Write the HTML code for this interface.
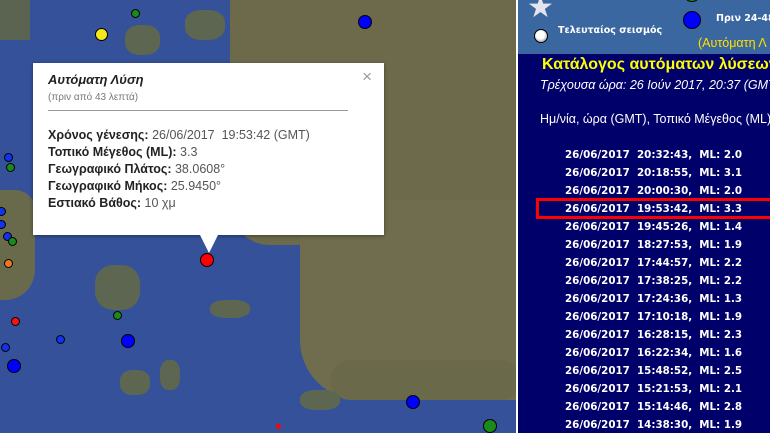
<!DOCTYPE html><html><head><meta charset="utf-8"><style>
*{margin:0;padding:0;box-sizing:border-box}
body{width:770px;height:433px;overflow:hidden;position:relative;background:#2f4c8c;font-family:"Liberation Sans","DejaVu Sans",sans-serif}
.map{position:absolute;left:0;top:0;width:516px;height:433px;overflow:hidden;background:#34519a}
.land{position:absolute;background:#6d6a4c}
.dot{position:absolute;border-radius:50%;border:1px solid #000}
.pop{position:absolute;left:33px;top:63px;width:351px;height:172px;background:#fff;box-shadow:0 1px 4px rgba(0,0,0,.4);font-size:13px;color:#222}
.pop b{color:#222}
.pop span{color:#555}
.right{position:absolute;left:516px;top:0;width:254px;height:433px;background:#fff}
.hdr{position:absolute;left:2px;top:0;width:252px;height:54px;background:#3b67a0}
.body{position:absolute;left:2px;top:54px;width:252px;height:379px;background:#00006a;color:#fff}
.row{position:absolute;left:47px;font-family:"DejaVu Sans",Verdana,sans-serif;font-weight:bold;font-size:10.3px;white-space:pre;color:#fff}
</style></head><body>
<div class="map">
<div class="land" style="left:230px;top:0;width:290px;height:245px;border-radius:0 0 0 40px"></div>
<div class="land" style="left:300px;top:200px;width:220px;height:200px;border-radius:40px 0 0 60px;background:#706c4e"></div>
<div class="land" style="left:330px;top:360px;width:190px;height:40px;background:#6a6a4a;border-radius:30px"></div>
<div class="land" style="left:0;top:190px;width:35px;height:110px;background:#696a4c;border-radius:0 20px 30px 0"></div>
<div class="land" style="left:0;top:0;width:30px;height:40px;background:#5a6450"></div>
<div class="land" style="left:185px;top:10px;width:40px;height:30px;border-radius:40%;background:#5d6650"></div>
<div class="land" style="left:125px;top:25px;width:35px;height:30px;border-radius:40%;background:#5d6650"></div>
<div class="land" style="left:95px;top:265px;width:45px;height:45px;border-radius:40%;background:#5d6650"></div>
<div class="land" style="left:210px;top:300px;width:40px;height:18px;border-radius:40%;background:#5d6650"></div>
<div class="land" style="left:160px;top:360px;width:20px;height:30px;border-radius:40%;background:#5d6650"></div>
<div class="land" style="left:120px;top:370px;width:30px;height:25px;border-radius:40%;background:#5d6650"></div>
<div class="land" style="left:300px;top:390px;width:40px;height:20px;border-radius:40%;background:#5d6650"></div>
<div class="dot" style="left:95px;top:28px;width:13px;height:13px;background:#f5e61e"></div>
<div class="dot" style="left:131px;top:9px;width:9px;height:9px;background:#1a8a1a"></div>
<div class="dot" style="left:358px;top:15px;width:14px;height:14px;background:#0000ff"></div>
<div class="dot" style="left:4px;top:153px;width:9px;height:9px;background:#1133ee"></div>
<div class="dot" style="left:6px;top:163px;width:9px;height:9px;background:#1a8a1a"></div>
<div class="dot" style="left:-3px;top:207px;width:9px;height:9px;background:#1133ee"></div>
<div class="dot" style="left:-3px;top:220px;width:9px;height:9px;background:#1133ee"></div>
<div class="dot" style="left:3px;top:232px;width:9px;height:9px;background:#1133ee"></div>
<div class="dot" style="left:8px;top:237px;width:9px;height:9px;background:#1a8a1a"></div>
<div class="dot" style="left:4px;top:259px;width:9px;height:9px;background:#ee7722"></div>
<div class="dot" style="left:11px;top:317px;width:9px;height:9px;background:#ff1111"></div>
<div class="dot" style="left:113px;top:311px;width:9px;height:9px;background:#1a8a1a"></div>
<div class="dot" style="left:56px;top:335px;width:9px;height:9px;background:#1133ee"></div>
<div class="dot" style="left:1px;top:343px;width:9px;height:9px;background:#1133ee"></div>
<div class="dot" style="left:121px;top:334px;width:14px;height:14px;background:#0000ff"></div>
<div class="dot" style="left:7px;top:359px;width:14px;height:14px;background:#0000ff"></div>
<div class="dot" style="left:200px;top:253px;width:14px;height:14px;background:#ff0000"></div>
<div class="dot" style="left:276px;top:424px;width:5px;height:5px;background:#ff0000;border:none"></div>
<div class="dot" style="left:406px;top:395px;width:14px;height:14px;background:#0000ff"></div>
<div class="dot" style="left:483px;top:419px;width:14px;height:14px;background:#1a8a1a"></div>
</div>
<div class="pop">
<div style="position:absolute;left:15px;top:9px;font-style:italic;font-weight:bold;font-size:13px">Αυτόματη Λύση</div>
<div style="position:absolute;left:15px;top:29px;font-size:10px;color:#777">(πριν από 43 λεπτά)</div>
<div style="position:absolute;right:12px;top:4px;font-size:17px;color:#999">×</div>
<div style="position:absolute;left:15px;top:47px;width:300px;border-top:1px solid #999"></div>
<div style="position:absolute;left:15px;top:64px;line-height:17px;font-size:12.5px">
<b>Χρόνος γένεσης:</b> <span>26/06/2017&nbsp; 19:53:42 (GMT)</span><br>
<b>Τοπικό Μέγεθος (ML):</b> <span>3.3</span><br>
<b>Γεωγραφικό Πλάτος:</b> <span>38.0608°</span><br>
<b>Γεωγραφικό Μήκος:</b> <span>25.9450°</span><br>
<b>Εστιακό Βάθος:</b> <span>10 χμ</span></div>
<div style="position:absolute;left:167px;top:172px;width:0;height:0;border-left:9px solid transparent;border-right:9px solid transparent;border-top:18px solid #fff"></div>
</div>
<div class="right">
<div class="hdr">
<div style="position:absolute;left:9px;top:-10px;color:#e4e4ee;font-size:30px">★</div>
<div style="position:absolute;left:16px;top:29px;width:14px;height:14px;border-radius:50%;background:radial-gradient(circle at 45% 40%,#fff 40%,#bbb 70%);border:1px solid #000"></div>
<div style="position:absolute;left:40px;top:25px;color:#fff;font-family:'DejaVu Sans',sans-serif;font-weight:bold;font-size:9.5px">Τελευταίος σεισμός</div>
<div style="position:absolute;left:165px;top:11px;width:18px;height:18px;border-radius:50%;background:#0000ff;border:1px solid #000"></div>
<div style="position:absolute;left:167px;top:-8px;width:14px;height:10px;border-radius:50%;background:#1a8a1a;border:1px solid #000"></div>
<div style="position:absolute;left:198px;top:13px;color:#fff;font-family:'DejaVu Sans',sans-serif;font-weight:bold;font-size:9.5px;white-space:nowrap">Πριν 24-48</div>
<div style="position:absolute;left:180px;top:36px;color:#ffe000;font-size:12.5px;white-space:nowrap">(Αυτόματη Λ</div>
</div>
<div class="body">
<div style="position:absolute;left:24px;top:2px;color:#ffff00;font-weight:bold;font-size:16px;white-space:nowrap">Κατάλογος αυτόματων λύσεων</div>
<div style="position:absolute;left:22px;top:24px;font-style:italic;font-size:12.5px;white-space:nowrap">Τρέχουσα ώρα: 26 Ιούν 2017, 20:37 (GMT)</div>
<div style="position:absolute;left:22px;top:58px;font-size:12.5px;white-space:nowrap">Ημ/νία, ώρα (GMT), Τοπικό Μέγεθος (ML)</div>
<div class="row" style="top:95px">26/06/2017  20:32:43,  ML: 2.0</div>
<div class="row" style="top:113px">26/06/2017  20:18:55,  ML: 3.1</div>
<div class="row" style="top:131px">26/06/2017  20:00:30,  ML: 2.0</div>
<div style="position:absolute;left:18px;top:144px;width:240px;height:21px;border:3px solid #ff0000"></div>
<div class="row" style="top:149px">26/06/2017  19:53:42,  ML: 3.3</div>
<div class="row" style="top:167px">26/06/2017  19:45:26,  ML: 1.4</div>
<div class="row" style="top:185px">26/06/2017  18:27:53,  ML: 1.9</div>
<div class="row" style="top:203px">26/06/2017  17:44:57,  ML: 2.2</div>
<div class="row" style="top:221px">26/06/2017  17:38:25,  ML: 2.2</div>
<div class="row" style="top:239px">26/06/2017  17:24:36,  ML: 1.3</div>
<div class="row" style="top:257px">26/06/2017  17:10:18,  ML: 1.9</div>
<div class="row" style="top:275px">26/06/2017  16:28:15,  ML: 2.3</div>
<div class="row" style="top:293px">26/06/2017  16:22:34,  ML: 1.6</div>
<div class="row" style="top:311px">26/06/2017  15:48:52,  ML: 2.5</div>
<div class="row" style="top:329px">26/06/2017  15:21:53,  ML: 2.1</div>
<div class="row" style="top:347px">26/06/2017  15:14:46,  ML: 2.8</div>
<div class="row" style="top:365px">26/06/2017  14:38:30,  ML: 1.9</div>
</div>
</div>
</body></html>
